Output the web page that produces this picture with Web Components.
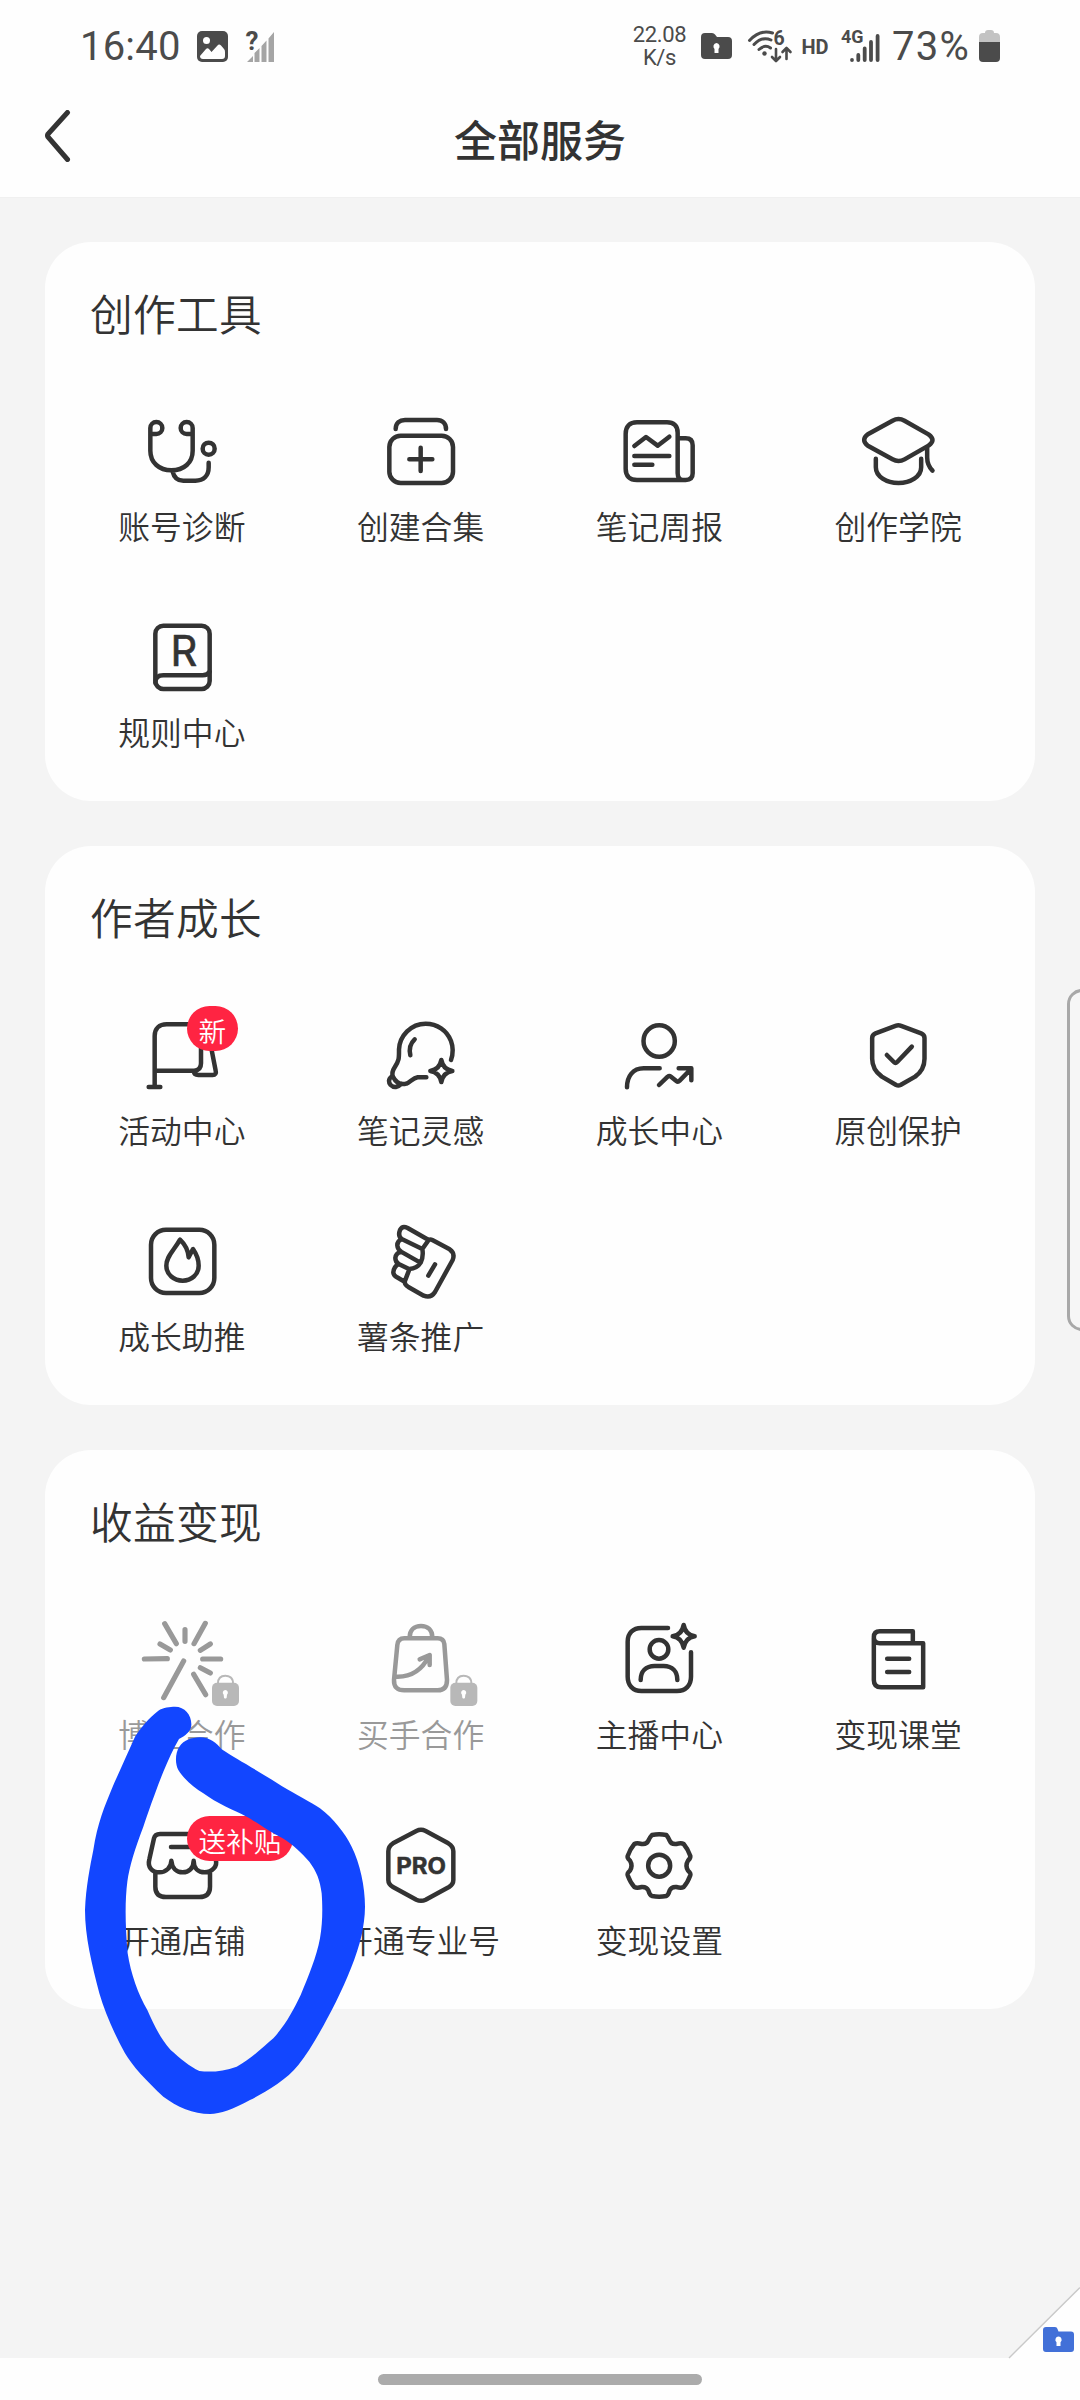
<!DOCTYPE html>
<html lang="zh-CN">
<head>
<meta charset="utf-8">
<title>全部服务</title>
<style>
html,body{margin:0;padding:0}
body{width:1080px;height:2400px;overflow:hidden;background:#f4f4f4;color:#333;font-family:"Noto Sans CJK SC","Noto Sans",sans-serif}
</style>
</head>
<body>
<service-page>
  <status-bar></status-bar>
  <page-header>全部服务</page-header>
  <main>
    <service-card>
      <span slot="title">创作工具</span>
      <service-item icon="diagnose">账号诊断</service-item>
      <service-item icon="collection">创建合集</service-item>
      <service-item icon="report">笔记周报</service-item>
      <service-item icon="academy">创作学院</service-item>
      <service-item icon="rules">规则中心</service-item>
    </service-card>
    <service-card>
      <span slot="title">作者成长</span>
      <service-item icon="flag" badge="新">活动中心</service-item>
      <service-item icon="bulb">笔记灵感</service-item>
      <service-item icon="growth">成长中心</service-item>
      <service-item icon="shield">原创保护</service-item>
      <service-item icon="fire">成长助推</service-item>
      <service-item icon="fries">薯条推广</service-item>
    </service-card>
    <service-card>
      <span slot="title">收益变现</span>
      <service-item icon="spark" locked>博主合作</service-item>
      <service-item icon="bag" locked>买手合作</service-item>
      <service-item icon="anchor">主播中心</service-item>
      <service-item icon="course">变现课堂</service-item>
      <service-item icon="shop" badge="送补贴">开通店铺</service-item>
      <service-item icon="pro">开通专业号</service-item>
      <service-item icon="gear">变现设置</service-item>
    </service-card>
  </main>
  <nav-bar slot="bottom"></nav-bar>
  <side-handle slot="over"></side-handle>
  <corner-fold slot="over"></corner-fold>
  <marker-stroke slot="over"></marker-stroke>
</service-page>

<script>
const define = (name, html) => customElements.define(name, class extends HTMLElement {
  connectedCallback() {
    if (this.shadowRoot) return;
    this.attachShadow({ mode: 'open' }).innerHTML = typeof html === 'function' ? html(this) : html;
  }
});

const lock = dx => `<g transform="translate(${dx} 0)" stroke="none"><rect x="516" y="308" width="81" height="70" rx="15" fill="#b8b8b8"/><path d="M534 310C534 293 545 287 556 287S579 293 579 310" fill="none" stroke="#b8b8b8" stroke-width="6"/><path d="M556 330a8 8 0 0 1 5 14l-1 9q-4 5-8 0l-1-9a8 8 0 0 1 5-14z" fill="#fff"/></g>`;

// Each entry: centre x, centre y, drawing (three units to one pixel)
const ICONS = {
  diagnose: [426, 636, `<path d="M331 564V632C331 668 358 691 394 691C432 691 458 668 458 632V564M331 564a18 18 0 1 1 18 18H331M458 564a18 18 0 1 0-18 18H458M398 695C402 712 414 722 430 722H466C492 722 506 706 506 682V668"/><circle cx="506" cy="626" r="18"/>`],
  collection: [1142, 636, `<path d="M1066 567C1066 548 1078 540 1094 540H1190C1206 540 1217 550 1217 567M1141 623V693M1107 658H1176"/><rect x="1047" y="587" width="191" height="142" rx="34"/>`],
  report: [358, 216, `<path d="M414 280V158C414 138 402 127 382 127H292C270 127 258 140 258 162V266C258 288 270 300 292 300H438C452 300 459 293 459 280V196C459 182 452 175 438 175H418M414 280C414 292 420 300 430 300M284 198L319 171L354 197L389 170M284 228H389M284 254H338"/>`],
  academy: [1074.5, 216, `<path d="M1058 122Q1076 112 1094 122L1166 163Q1190 180 1166 197L1094 238Q1076 248 1058 238L984 197Q962 180 984 163ZM1008 236V262C1008 290 1040 309 1076 309S1144 290 1144 262V236M1162 203V232C1162 252 1168 262 1178 272"/>`],
  rules: [426, 174, `<rect x="346" y="77" width="163" height="190" rx="24"/><path d="M346 248C346 232 356 226 370 226H488Q503 226 509 215"/><text x="432" y="198" text-anchor="middle" font-size="125" font-weight="400" font-family="Inter" fill="#333" stroke-width="2">R</text>`],
  flag: [426, 228, `<path d="M344 318V168C344 145 358 133 380 133H460C475 133 483 141 483 156V250C483 264 476 272 462 272H344M326 321H361M462 274Q462 285 475 285H518C526 285 529 280 527 272L514 205L505 160"/>`],
  bulb: [1142, 228, `<path d="M1232 240C1239 220 1239 202 1232 183C1220 151 1190 131 1156 131C1112 131 1078 167 1076 208C1076 234 1077 240 1064 260C1056 272 1053 280 1058 290C1068 310 1082 315 1098 311C1112 304 1118 294 1132 292H1158M1056 288C1042 298 1045 308 1051 315C1061 325 1073 322 1083 312M1123 178C1110 190 1106 208 1110 226M1203 240Q1208 268 1236 273Q1208 278 1203 306Q1198 278 1170 273Q1198 268 1203 240Z"/>`],
  growth: [358, 228, `<circle cx="358.500" cy="183" r="47"/><path d="M262 322C262 288 280 265 312 265H360M358 315L384 290Q389 286 394 290L410 303Q415 307 420 302L454 267M417 265H455V301"/>`],
  shield: [1074.5, 228, `<path d="M1069 137Q1075.500 134 1082 137L1144 160Q1154 164 1154 174V236C1154 258 1146 275 1126 290L1082 315Q1075.500 318 1069 315L1026 290C1006 275 997 258 997 236V174Q997 164 1007 160ZM1041 225L1062 246Q1067 251 1072 246L1116 200"/>`],
  fire: [426, 846, `<rect x="333" y="749" width="190" height="190" rx="45"/><path d="M420 779C402 812 379 828 379 857C379 884 402 902 428 902S476 884 476 857C476 838 468 820 459 807L446 832C444 808 434 792 420 779Z"/>`],
  fries: [1142, 846, `<path d="M1165 780Q1170 777 1176 780L1228 808Q1245 820 1237 840L1184 936Q1172 955 1150 947L1104 921Q1092 913 1093 905M1165 780L1102 744Q1086 736 1079 750Q1072 768 1084 777L1146 807L1165 780M1084 777Q1070 784 1071 797Q1072 808 1082 815L1140 848M1082 815Q1066 820 1065 834Q1065 846 1075 852L1106 867M1075 852Q1060 860 1059 878Q1060 886 1070 892L1093 905L1107 868M1146 807Q1150 830 1141 848Q1130 866 1107 867M1184 853L1164 887"/>`],
  spark: [426, 240, `<path stroke-width="15.500" d="M374 131L409 191M435 149V184M496 130L462 191M360 192L391 210M511 192L481 211M313 237L382 236M488 237H542M481 263L511 279M461 283L497 344M431 243L371 353"/>` + lock(0)],
  bag: [1142, 240, `<path d="M1092 175H1192Q1210 175 1212 192L1220 300Q1220 331 1192 331H1092Q1060 331 1061 300L1071 195Q1073 175 1092 175ZM1108 172C1108 150 1122 138 1142 138S1176 150 1176 172M1066 290C1110 292 1145 270 1166 228M1138 238L1168 225V255"/>` + lock(714)],
  anchor: [358, 240, `<path d="M385 144H305C280 144 264 160 264 185V290C264 316 280 333 305 333H412C438 333 454 316 454 290V217M303 300C303 275 318 258 345 258H372C398 258 413 275 413 300M432 135Q437 164 465 169Q437 174 432 203Q427 174 399 169Q427 164 432 135Z"/><circle cx="358" cy="208" r="28"/>`],
  course: [1074.5, 240, `<path d="M1002 174V300Q1002 322 1024 322H1150V190H1020Q1002 190 1002 172T1020 154H1119V188M1042 236H1108M1042 276H1108"/>`],
  gear: [358, 858, `<circle cx="358.500" cy="857" r="33"/><path d="M337 765Q358 761 380 765Q386 772 390 782Q395 794 410 792Q425 788 432 792Q444 806 452 828Q453 834 445 842Q436 857 445 872Q454 880 452 886Q444 908 432 921Q425 925 410 921Q395 920 390 931Q386 945 380 948Q358 952 337 948Q330 945 326 931Q321 920 306 921Q291 925 284 921Q272 908 264 886Q262 880 271 872Q280 857 271 842Q262 834 264 828Q272 806 284 792Q291 788 306 792Q321 794 326 782Q330 772 337 765Z"/>`],
  shop: [366, 528, `<path d="M300 432Q285 432 282 445L268 508C262 530 275 547 298 547C318 547 334 532 334 512C336 535 350 547 368 547S401 535 401 512C401 535 415 547 434 547C455 547 474 530 467 508L453 445Q450 432 435 432ZM333 471H400M286 550V590Q286 621 318 621H418Q450 621 450 590V550"/>`],
  pro: [1082, 528, `<path d="M1068 423Q1082 416 1096 423L1164 460Q1179 469 1179 484V570Q1179 583 1166 591L1096 629Q1082 636 1068 629L998 591Q984 583 984 570V484Q984 469 998 460Z"/><text x="1008" y="552" font-size="67" font-weight="700" fill="#333" stroke-width="1.500" textLength="149" lengthAdjust="spacingAndGlyphs">PRO</text>`]
};

define('service-page', `<style>
:host{display:flex;flex-direction:column;width:1080px;height:2400px;position:relative;overflow:hidden}
::slotted(main){display:flex;flex-direction:column;gap:45px;padding:44px 45px 0;flex:1}
</style><slot></slot><slot name="bottom"></slot><slot name="over"></slot>`);

define('status-bar', `<style>
:host{display:flex;height:92px;background:#fefefe;color:#4b4b4b;font-family:Roboto,sans-serif;padding:0 80px;justify-content:space-between;box-sizing:border-box}
.g{display:flex;align-items:center;height:92px}
.big{font-size:40px;line-height:40px;padding-top:2px;white-space:nowrap}
.speed{font-size:22px;line-height:23px;text-align:center;font-weight:400;width:55px;color:#4b4b4b;letter-spacing:-.4px}
svg{display:block;overflow:visible}
</style>
<div class="g"><span class="big" style="width:117px;letter-spacing:.2px">16:40</span>
<svg width="31" height="31" viewBox="0 0 31 31"><rect width="31" height="31" rx="5" fill="#4b4b4b"/><circle cx="9.500" cy="9.500" r="3.500" fill="#fff"/><path d="M3 25l6-7q1.500-1.500 3 0l2.500 3 6-6.500q1.500-2 3.500 0l3 3.500q1 1 1 3v4q0 3-3 3H6q-3 0-3-3z" fill="#fff"/></svg>
<svg style="margin-left:18px" width="30" height="31" viewBox="0 0 30 31"><path d="M1 31l6-6v6zM8.500 31V22l5-5v14zM15.500 31V15l5-5.500V31zM22.500 31V7.500L28 1v30z" fill="#a5a5a5"/><text x="-.5" y="18.500" font-size="26" font-weight="700" fill="#4b4b4b">?</text></svg></div>
<div class="g"><span class="speed">22.08<br>K/s</span>
<svg style="margin-left:14px" width="31" height="26" viewBox="0 0 31 26"><path d="M4 0h7q2 0 3 1.500L16 4h11q4 0 4 4v14q0 4-4 4H4q-4 0-4-4V4q0-4 4-4z" fill="#4b4b4b"/><path d="M15.500 10a3.500 3.500 0 0 1 2 6v4h-4v-4a3.500 3.500 0 0 1 2-6z" fill="#fff"/></svg>
<svg style="margin-left:16px" width="44" height="32" viewBox="0 0 44 32"><g fill="none" stroke="#4b4b4b" stroke-width="3" stroke-linecap="round" stroke-linejoin="round"><path d="M1.500 10.500Q12-1 24.500 3M6 14.500Q14 6 23 10M11 19.500Q17 14 22.500 18"/><path d="M28 19v11.500M24 27l4 4 4-4M38.500 29V18.500M34.500 22l4-4 4 4" stroke-width="2.600"/></g><circle cx="16.500" cy="23.500" r="2.200" fill="#4b4b4b"/><text x="25.500" y="15" font-size="19.500" font-weight="700" fill="#4b4b4b">6</text></svg>
<svg style="margin-left:10px" width="27" height="31" viewBox="0 0 27 31"><text x="-.5" y="23" font-size="20" font-weight="700" fill="#4b4b4b" textLength="27">HD</text></svg>
<svg style="margin-left:12px" width="39" height="32" viewBox="0 0 39 32"><text x="0" y="13" font-size="18" font-weight="700" fill="#4b4b4b" textLength="22.500" lengthAdjust="spacingAndGlyphs">4G</text><g stroke="#4b4b4b" stroke-width="3.800" stroke-linecap="round"><path d="M11 30V30M17.300 30V25M23.700 30V18.500M30 30V12M36.600 30V6"/></g></svg>
<span class="big" style="margin:0 8px 0 12px;width:79px;letter-spacing:1.300px">73%</span>
<svg width="21" height="32" viewBox="0 0 21 32"><path d="M6 3q0-3 3-3h3q3 0 3 3h2q4 0 4 4v6H0V7q0-4 4-4z" fill="#c3c3c3"/><path d="M0 12h21v16q0 4-4 4H4q-4 0-4-4z" fill="#4b4b4b"/></svg></div>`);

define('page-header', `<style>
:host{display:flex;height:106px;background:#fefefe;align-items:center;padding:0 44px;font-size:43px;font-weight:500;line-height:60px;box-sizing:border-box;border-bottom:1px solid #f0f0f0}
.side{width:120px;height:52px;margin-top:-17px}
h1{font:inherit;margin:-13px 0 0;flex:1;text-align:center}
svg{display:block}
</style><div class="side"><svg width="28" height="52" viewBox="0 0 28 52"><path d="M23.500 2.500L4 24Q3 25.500 4 27L23.500 49.500" fill="none" stroke="#333" stroke-width="5" stroke-linecap="round"/></svg></div><h1><slot></slot></h1><div class="side"></div>`);

define('service-card', `<style>
:host{display:block;background:#fefefe;border-radius:46px;height:559px;box-sizing:border-box;padding-top:40px}
.title{font-size:42.700px;letter-spacing:.3px;line-height:60px;padding-left:45px;font-weight:350}
.grid{display:grid;grid-template-columns:repeat(4,1fr);grid-auto-rows:206px;padding:3px 17.500px 0}
</style><div class="title"><slot name="title"></slot></div><div class="grid"><slot></slot></div>`);

define('service-item', el => {
  const [cx, cy, art] = ICONS[el.getAttribute('icon')];
  const badge = el.getAttribute('badge');
  return `<style>
:host{display:flex;flex-direction:column;align-items:center;padding-top:59px;box-sizing:border-box;--ink:#333}
:host([locked]){--ink:#999}
.icon{position:relative;width:96px;height:96px}
svg{display:block;overflow:visible;fill:none;stroke:var(--ink);stroke-linecap:round;stroke-linejoin:round;font-family:Inter,sans-serif}
.label{font-size:31.800px;line-height:44px;margin-top:3px;white-space:nowrap;color:var(--ink);font-weight:350}
.badge{position:absolute;left:53px;top:-2px;height:45px;border-radius:23px;background:#ff2442;color:#fff;font-size:27.600px;line-height:48px;padding:0 11.700px;white-space:nowrap;font-weight:350}
</style><div class="icon"><svg width="96" height="96" viewBox="${cx - 144} ${cy - 144} 288 288" stroke-width="13.500">${art}</svg>${badge ? `<span class="badge">${badge}</span>` : ''}</div><div class="label"><slot></slot></div>`;
});

define('nav-bar', `<style>
:host{display:flex;height:42px;background:#fefefe;justify-content:center;align-items:center}
i{display:block;width:324px;height:11px;border-radius:6px;background:#ababab}
</style><i></i>`);

define('side-handle', `<style>
:host{display:block;position:absolute;left:1067px;top:989px;width:40px;height:342px;box-sizing:border-box;border:3px solid #a8a8a8;border-radius:15px;background:#f6f6f6}
</style>`);

define('corner-fold', `<style>
:host{display:block;position:absolute;right:0;top:2287px;width:72px;height:72px}
svg{display:block}
</style><svg width="72" height="72" viewBox="0 0 72 72"><path d="M1 71L72 .5V72H0z" fill="#fefefe"/><path d="M1 71L72 .5" stroke="#c9c9c9" stroke-width="1.500"/><path d="M38 40h9q2 0 2.500 2l1 2.500H63q3 0 3 3V62q0 3-3 3H38q-3 0-3-3V43q0-3 3-3z" fill="#4270d8"/><path d="M50.500 49.500a3.300 3.300 0 0 1 2 5.800V59h-4v-3.700a3.300 3.300 0 0 1 2-5.800z" fill="#fff"/></svg>`);

define('marker-stroke', `<style>
:host{display:block;position:absolute;left:60px;top:1690px;width:460px;height:440px}
svg{display:block}
</style><svg width="460" height="440" viewBox="0 0 1380 1320"><path fill="#1246ff" d="M345 50C375 50 395 75 394 105C393 125 375 138 357 147C340 175 325 210 310 245C290 295 265 365 250 410C225 475 208 530 202 575C195 630 195 700 203 790C212 850 235 915 262 960C280 1000 300 1045 332 1080C360 1105 390 1130 418 1143C450 1147 490 1145 530 1130C570 1110 610 1070 640 1045C680 1000 700 960 722 915C745 860 770 800 780 745C788 700 788 650 785 610C780 570 770 545 748 515C725 490 700 465 668 445C620 420 580 390 560 380C520 360 470 340 430 310C400 292 370 265 355 240C345 220 345 190 358 170C372 150 395 143 420 142C450 142 470 160 485 178C530 208 600 245 665 288C710 315 750 335 780 355C820 385 855 430 875 470C900 520 915 590 915 650C915 680 910 710 905 735C890 800 860 870 828 935C795 1000 755 1075 715 1125C680 1170 610 1210 570 1230C520 1258 480 1272 450 1272C400 1272 350 1250 310 1220C260 1175 215 1125 195 1090C165 1035 135 970 118 910C95 820 75 740 75 660C78 590 90 530 100 480C112 400 135 345 158 290C180 240 205 185 225 140C245 110 265 85 295 62C310 52 330 50 345 50Z"/></svg>`);
</script>
</body>
</html>
